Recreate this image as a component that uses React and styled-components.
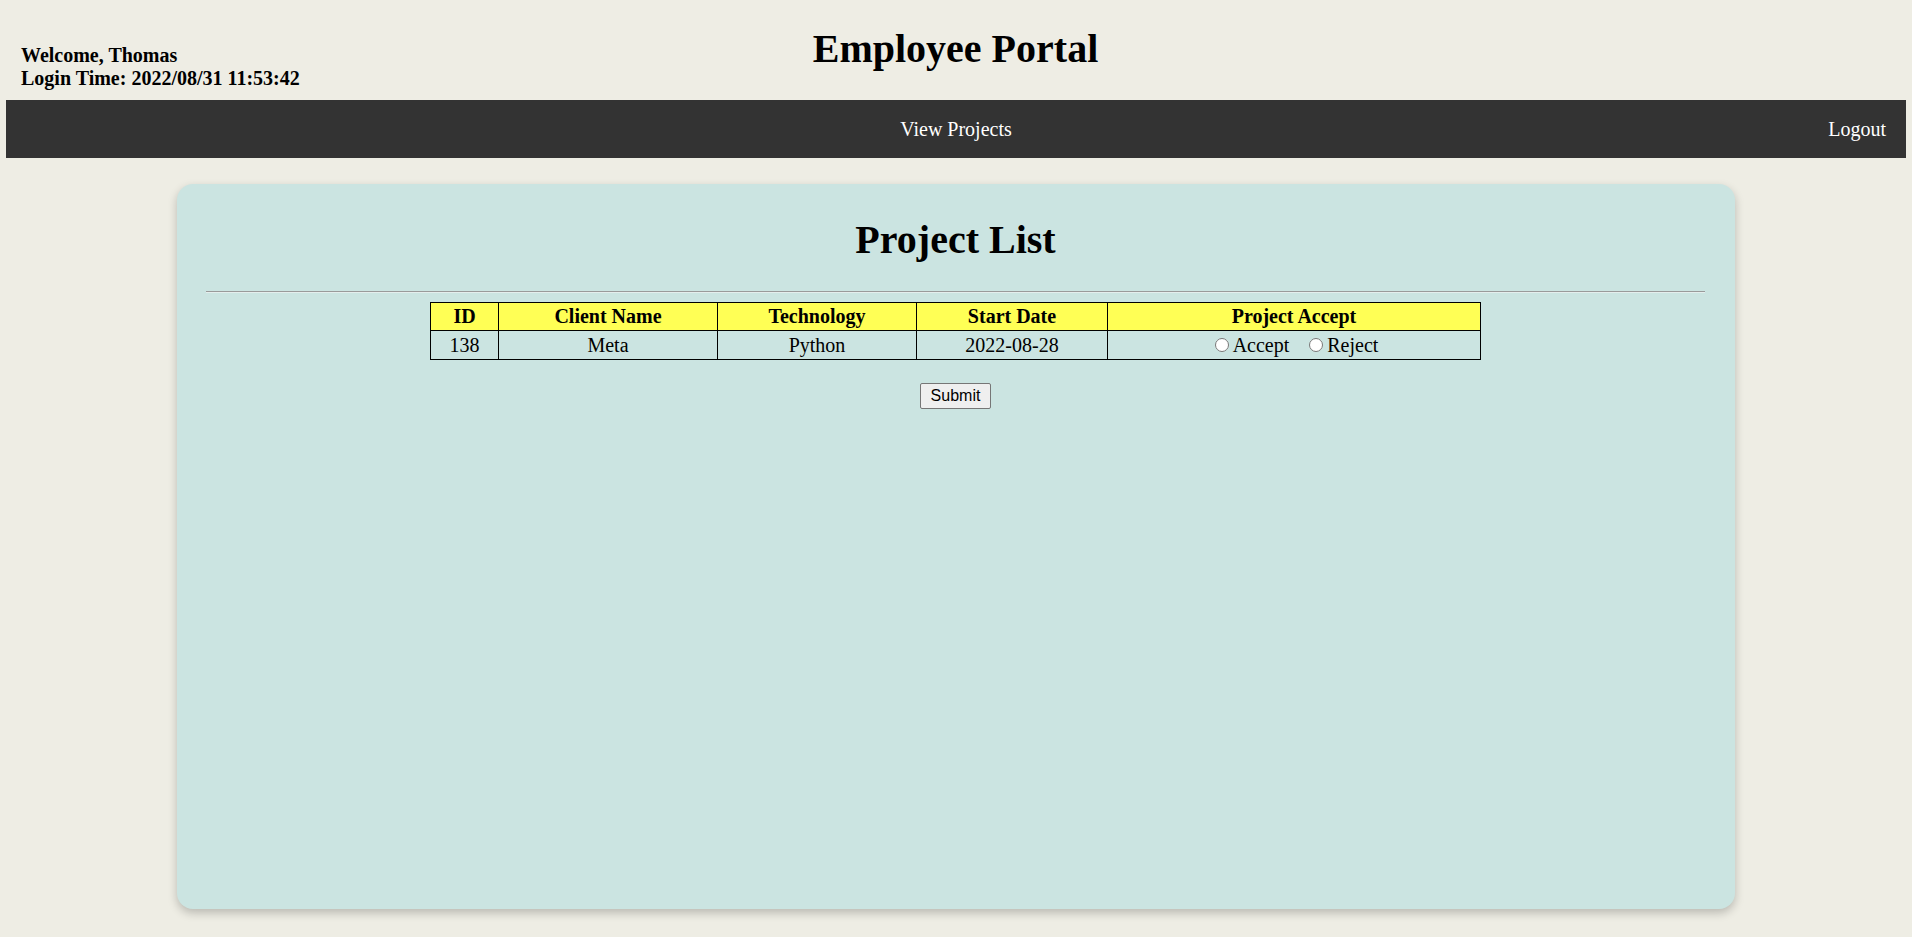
import styled, { createGlobalStyle } from 'styled-components';

const GlobalStyle = createGlobalStyle`
  body {
    margin: 0;
    background: #eeede4;
    font-family: "Liberation Serif", "Times New Roman", serif;
    color: #000;
  }
`;

const Page = styled.div`
  padding: 0 6px 28px;
`;

const Header = styled.header`
  display: grid;
  grid-template-columns: 1fr auto 1fr;
  align-items: start;
  padding: 26px 16px 10px 15px;
`;

const UserInfo = styled.div`
  margin-top: 18px;
  font-size: 20px;
  font-weight: bold;
  line-height: 23px;
`;

const SiteTitle = styled.h1`
  margin: 0;
  font-size: 40px;
  line-height: 46px;
  font-weight: bold;
`;

const NavBar = styled.nav`
  display: grid;
  grid-template-columns: 1fr auto 1fr;
  align-items: center;
  height: 58px;
  background: #333;
`;

const NavLink = styled.a`
  grid-column: ${(p) => p.$col};
  justify-self: ${(p) => (p.$end ? 'end' : 'center')};
  padding-right: ${(p) => (p.$end ? '20px' : '0')};
  color: #fff;
  font-size: 20px;
  text-decoration: none;
  cursor: pointer;
`;

const Card = styled.main`
  box-sizing: border-box;
  width: 1558px;
  height: 725px;
  margin: 26px auto 0;
  padding: 0 30px 0 29px;
  background: #cbe4e1;
  border-radius: 16px;
  box-shadow: 0 4px 10px rgba(0, 0, 0, 0.22);
  display: flex;
  flex-direction: column;
  align-items: center;
`;

const CardTitle = styled.h2`
  margin: 33px 0 28px;
  font-size: 40px;
  line-height: 46px;
  font-weight: bold;
`;

const Rule = styled.hr`
  align-self: stretch;
  margin: 0 0 9px;
  border: none;
  border-top: 1px solid #9a9a9a;
  border-bottom: 1px solid #e4eeed;
`;

const Table = styled.table`
  width: 1050px;
  border-collapse: collapse;
  table-layout: fixed;
  border: 1px solid #000;
  font-size: 20px;
`;

const HeadCell = styled.th`
  box-sizing: border-box;
  width: ${(p) => p.$w}px;
  padding: 2px 4px;
  background: #ffff55;
  border: 1px solid #000;
  font-weight: bold;
  line-height: 23px;
`;

const Cell = styled.td`
  padding: 3px 4px 2px;
  border: 1px solid #000;
  text-align: center;
  line-height: 23px;
`;

const Option = styled.label`
  & + & {
    margin-left: 15px;
  }
  input {
    width: 14px;
    height: 14px;
    margin: 3px 4px 0 5px;
  }
`;

const SubmitButton = styled.button`
  margin-top: 23px;
  padding: 3px 10px;
  font-family: "Liberation Sans", Arial, sans-serif;
  font-size: 16px;
  line-height: 18px;
  color: #000;
  background: #efefef;
  border: 1px solid #767676;
  border-radius: 2px;
`;

const columns = [
  { title: 'ID', w: 68 },
  { title: 'Client Name', w: 219 },
  { title: 'Technology', w: 199 },
  { title: 'Start Date', w: 191 },
  { title: 'Project Accept', w: 373 },
];

const projects = [
  { id: 138, client: 'Meta', tech: 'Python', start: '2022-08-28' },
];

function App() {
  return (
    <Page>
      <GlobalStyle />
      <Header>
        <UserInfo>
          Welcome, Thomas
          <br />
          Login Time: 2022/08/31 11:53:42
        </UserInfo>
        <SiteTitle>Employee Portal</SiteTitle>
      </Header>
      <NavBar>
        <NavLink $col={2}>View Projects</NavLink>
        <NavLink $col={3} $end>Logout</NavLink>
      </NavBar>
      <Card>
        <CardTitle>Project List</CardTitle>
        <Rule />
        <Table>
          <thead>
            <tr>
              {columns.map((c) => (
                <HeadCell key={c.title} $w={c.w}>{c.title}</HeadCell>
              ))}
            </tr>
          </thead>
          <tbody>
            {projects.map((p) => (
              <tr key={p.id}>
                <Cell>{p.id}</Cell>
                <Cell>{p.client}</Cell>
                <Cell>{p.tech}</Cell>
                <Cell>{p.start}</Cell>
                <Cell>
                  <Option>
                    <input type="radio" name={`accept-${p.id}`} value="accept" />
                    Accept
                  </Option>
                  <Option>
                    <input type="radio" name={`accept-${p.id}`} value="reject" />
                    Reject
                  </Option>
                </Cell>
              </tr>
            ))}
          </tbody>
        </Table>
        <SubmitButton type="button">Submit</SubmitButton>
      </Card>
    </Page>
  );
}

export default App;
